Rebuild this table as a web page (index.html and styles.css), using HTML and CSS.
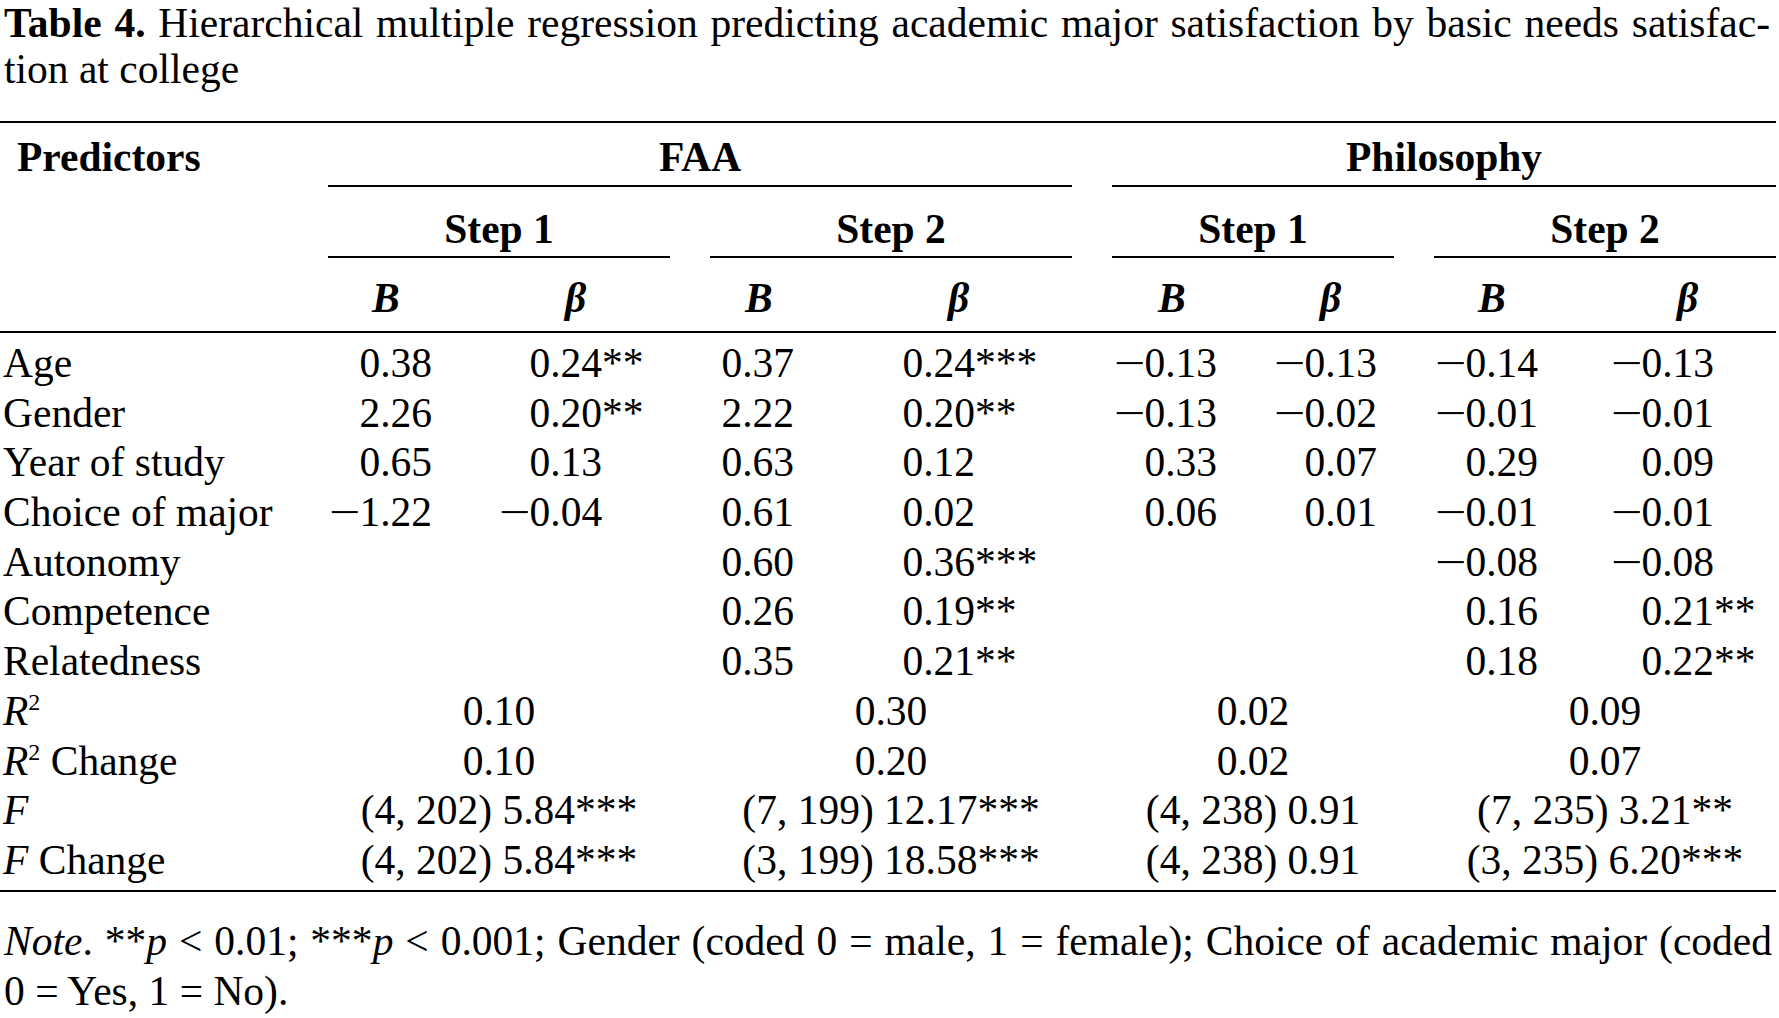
FILE: index.html
```html
<!DOCTYPE html>
<html lang="en">
<head>
<meta charset="utf-8">
<title>Table 4</title>
<link rel="stylesheet" href="styles.css">
</head>
<body>
<div class="page">
  <p class="caption"><span class="first-line"><b class="label">Table 4.</b> Hierarchical multiple regression predicting academic major satisfaction by basic needs satisfac-</span>tion at college</p>

  <table class="reg">
    <colgroup>
      <col class="w-pred">
      <col class="w-a"><col class="w-a">
      <col class="w-b"><col class="w-b">
      <col class="w-c"><col class="w-c">
      <col class="w-d"><col class="w-d">
    </colgroup>
    <thead>
      <tr class="h1">
        <th rowspan="3" class="pred">Predictors</th>
        <th colspan="4"><div class="grp">FAA</div></th>
        <th colspan="4"><div class="grp end">Philosophy</div></th>
      </tr>
      <tr class="h2">
        <th colspan="2"><div class="grp">Step 1</div></th>
        <th colspan="2"><div class="grp">Step 2</div></th>
        <th colspan="2"><div class="grp">Step 1</div></th>
        <th colspan="2"><div class="grp end">Step 2</div></th>
      </tr>
      <tr class="h3">
        <th class="hc1"><i>B</i></th>
        <th class="hc2"><i>β</i></th>
        <th class="hc3"><i>B</i></th>
        <th class="hc4"><i>β</i></th>
        <th class="hc5"><i>B</i></th>
        <th class="hc6"><i>β</i></th>
        <th class="hc7"><i>B</i></th>
        <th class="hc8"><i>β</i></th>
      </tr>
    </thead>
    <tbody>
      <tr class="first">
        <td class="lab">Age</td>
        <td class="c1">0.38</td>
        <td class="c2">0.24<span class="sig">**</span></td>
        <td class="c3">0.37</td>
        <td class="c4">0.24<span class="sig">***</span></td>
        <td class="c5"><span class="neg">−</span>0.13</td>
        <td class="c6"><span class="neg">−</span>0.13</td>
        <td class="c7"><span class="neg">−</span>0.14</td>
        <td class="c8"><span class="neg">−</span>0.13</td>
      </tr>
      <tr>
        <td class="lab">Gender</td>
        <td class="c1">2.26</td>
        <td class="c2">0.20<span class="sig">**</span></td>
        <td class="c3">2.22</td>
        <td class="c4">0.20<span class="sig">**</span></td>
        <td class="c5"><span class="neg">−</span>0.13</td>
        <td class="c6"><span class="neg">−</span>0.02</td>
        <td class="c7"><span class="neg">−</span>0.01</td>
        <td class="c8"><span class="neg">−</span>0.01</td>
      </tr>
      <tr>
        <td class="lab">Year of study</td>
        <td class="c1">0.65</td>
        <td class="c2">0.13</td>
        <td class="c3">0.63</td>
        <td class="c4">0.12</td>
        <td class="c5">0.33</td>
        <td class="c6">0.07</td>
        <td class="c7">0.29</td>
        <td class="c8">0.09</td>
      </tr>
      <tr>
        <td class="lab">Choice of major</td>
        <td class="c1"><span class="neg">−</span>1.22</td>
        <td class="c2"><span class="neg">−</span>0.04</td>
        <td class="c3">0.61</td>
        <td class="c4">0.02</td>
        <td class="c5">0.06</td>
        <td class="c6">0.01</td>
        <td class="c7"><span class="neg">−</span>0.01</td>
        <td class="c8"><span class="neg">−</span>0.01</td>
      </tr>
      <tr>
        <td class="lab">Autonomy</td>
        <td class="c1"></td>
        <td class="c2"></td>
        <td class="c3">0.60</td>
        <td class="c4">0.36<span class="sig">***</span></td>
        <td class="c5"></td>
        <td class="c6"></td>
        <td class="c7"><span class="neg">−</span>0.08</td>
        <td class="c8"><span class="neg">−</span>0.08</td>
      </tr>
      <tr>
        <td class="lab">Competence</td>
        <td class="c1"></td>
        <td class="c2"></td>
        <td class="c3">0.26</td>
        <td class="c4">0.19<span class="sig">**</span></td>
        <td class="c5"></td>
        <td class="c6"></td>
        <td class="c7">0.16</td>
        <td class="c8">0.21<span class="sig">**</span></td>
      </tr>
      <tr>
        <td class="lab">Relatedness</td>
        <td class="c1"></td>
        <td class="c2"></td>
        <td class="c3">0.35</td>
        <td class="c4">0.21<span class="sig">**</span></td>
        <td class="c5"></td>
        <td class="c6"></td>
        <td class="c7">0.18</td>
        <td class="c8">0.22<span class="sig">**</span></td>
      </tr>
      <tr>
        <td class="lab"><i>R</i><span class="sup">2</span></td>
        <td colspan="2" class="sum">0.10</td>
        <td colspan="2" class="sum">0.30</td>
        <td colspan="2" class="sum">0.02</td>
        <td colspan="2" class="sum end">0.09</td>
      </tr>
      <tr>
        <td class="lab"><i>R</i><span class="sup">2</span> Change</td>
        <td colspan="2" class="sum">0.10</td>
        <td colspan="2" class="sum">0.20</td>
        <td colspan="2" class="sum">0.02</td>
        <td colspan="2" class="sum end">0.07</td>
      </tr>
      <tr>
        <td class="lab"><i>F</i></td>
        <td colspan="2" class="sum">(4, 202) 5.84***</td>
        <td colspan="2" class="sum">(7, 199) 12.17***</td>
        <td colspan="2" class="sum">(4, 238) 0.91</td>
        <td colspan="2" class="sum end">(7, 235) 3.21**</td>
      </tr>
      <tr class="last">
        <td class="lab"><i>F</i> Change</td>
        <td colspan="2" class="sum">(4, 202) 5.84***</td>
        <td colspan="2" class="sum">(3, 199) 18.58***</td>
        <td colspan="2" class="sum">(4, 238) 0.91</td>
        <td colspan="2" class="sum end">(3, 235) 6.20***</td>
      </tr>
    </tbody>
  </table>

  <p class="note"><span class="first-line"><i>Note</i>. **<i>p</i> &lt; 0.01; ***<i>p</i> &lt; 0.001; Gender (coded 0 = male, 1 = female); Choice of academic major (coded</span>0 = Yes, 1 = No).</p>
</div>
</body>
</html>
```

FILE: styles.css
```css
html, body {
  margin: 0;
  padding: 0;
  background: #ffffff;
}

body {
  color: #000000;
  font-family: "Liberation Serif", "Times New Roman", serif;
  font-size: 41.5px;
}

.page {
  width: 1776px;
}

/* caption */
.caption {
  margin: 0;
  padding: 0 6px 0 4px;
  line-height: 46px;
}

.first-line {
  display: block;
  text-align: justify;
  text-align-last: justify;
}

.label {
  font-weight: bold;
}

/* table */
.reg {
  width: 1776px;
  table-layout: fixed;
  border-collapse: separate;
  border-spacing: 0;
  margin-top: 29px;
  border-top: 2px solid #000;
}

.w-pred { width: 308px; }
.w-a { width: 191px; }
.w-b { width: 201px; }
.w-c { width: 161px; }
.w-d { width: 181px; }

.reg th {
  font-weight: bold;
  line-height: 48px;
  padding: 0;
  vertical-align: top;
  white-space: nowrap;
}

.grp {
  margin: 0 20px;
  text-align: center;
  border-bottom: 2px solid #000;
}

.grp.end {
  margin-right: 0;
}

.h1 th {
  padding-top: 10px;
}

.h1 .grp {
  padding-bottom: 4px;
}

.h2 th {
  padding-top: 17.7px;
}

.h2 .grp {
  padding-bottom: 3.3px;
}

.h3 th {
  padding-top: 15.7px;
  padding-bottom: 9.3px;
  border-bottom: 2px solid #000;
  text-align: left;
}

.reg th.pred {
  text-align: left;
  padding-left: 17px;
  border-bottom: 2px solid #000;
}

.reg .h3 .hc1 { padding-left: 64px; }
.reg .h3 .hc2 { padding-left: 66px; }
.reg .h3 .hc3 { padding-left: 55px; }
.reg .h3 .hc4 { padding-left: 57px; }
.reg .h3 .hc5 { padding-left: 66px; }
.reg .h3 .hc6 { padding-left: 67px; }
.reg .h3 .hc7 { padding-left: 64px; }
.reg .h3 .hc8 { padding-left: 82px; }

.reg td {
  padding: 0;
  line-height: 49.7px;
  white-space: nowrap;
  text-align: right;
  vertical-align: top;
}

.reg .first td {
  padding-top: 6px;
}

.reg .last td {
  padding-bottom: 4px;
  border-bottom: 2px solid #000;
}

.reg td.lab {
  text-align: left;
  padding-left: 3px;
}

.reg td.c1 { padding-right: 67px; }
.reg td.c2 { padding-right: 88px; }
.reg td.c3 { padding-right: 97px; }
.reg td.c4 { padding-right: 117px; }
.reg td.c5 { padding-right: 36px; }
.reg td.c6 { padding-right: 37px; }
.reg td.c7 { padding-right: 57px; }
.reg td.c8 { padding-right: 62px; }

.neg {
  display: inline-block;
  width: 0.735em;
  text-align: left;
  transform: scaleX(1.35);
  transform-origin: 0 50%;
}

.sig {
  display: inline-block;
  width: 0;
  white-space: nowrap;
  text-align: left;
}

.reg td.sum {
  text-align: center;
  padding-left: 20px;
  padding-right: 20px;
}

.reg td.sum.end {
  padding-right: 0;
}

.sup {
  font-size: 24px;
  line-height: 0;
  vertical-align: 15px;
}

/* note */
.note {
  margin: 24.6px 0 0;
  padding: 0 4px 0 4px;
  line-height: 50px;
}
```
